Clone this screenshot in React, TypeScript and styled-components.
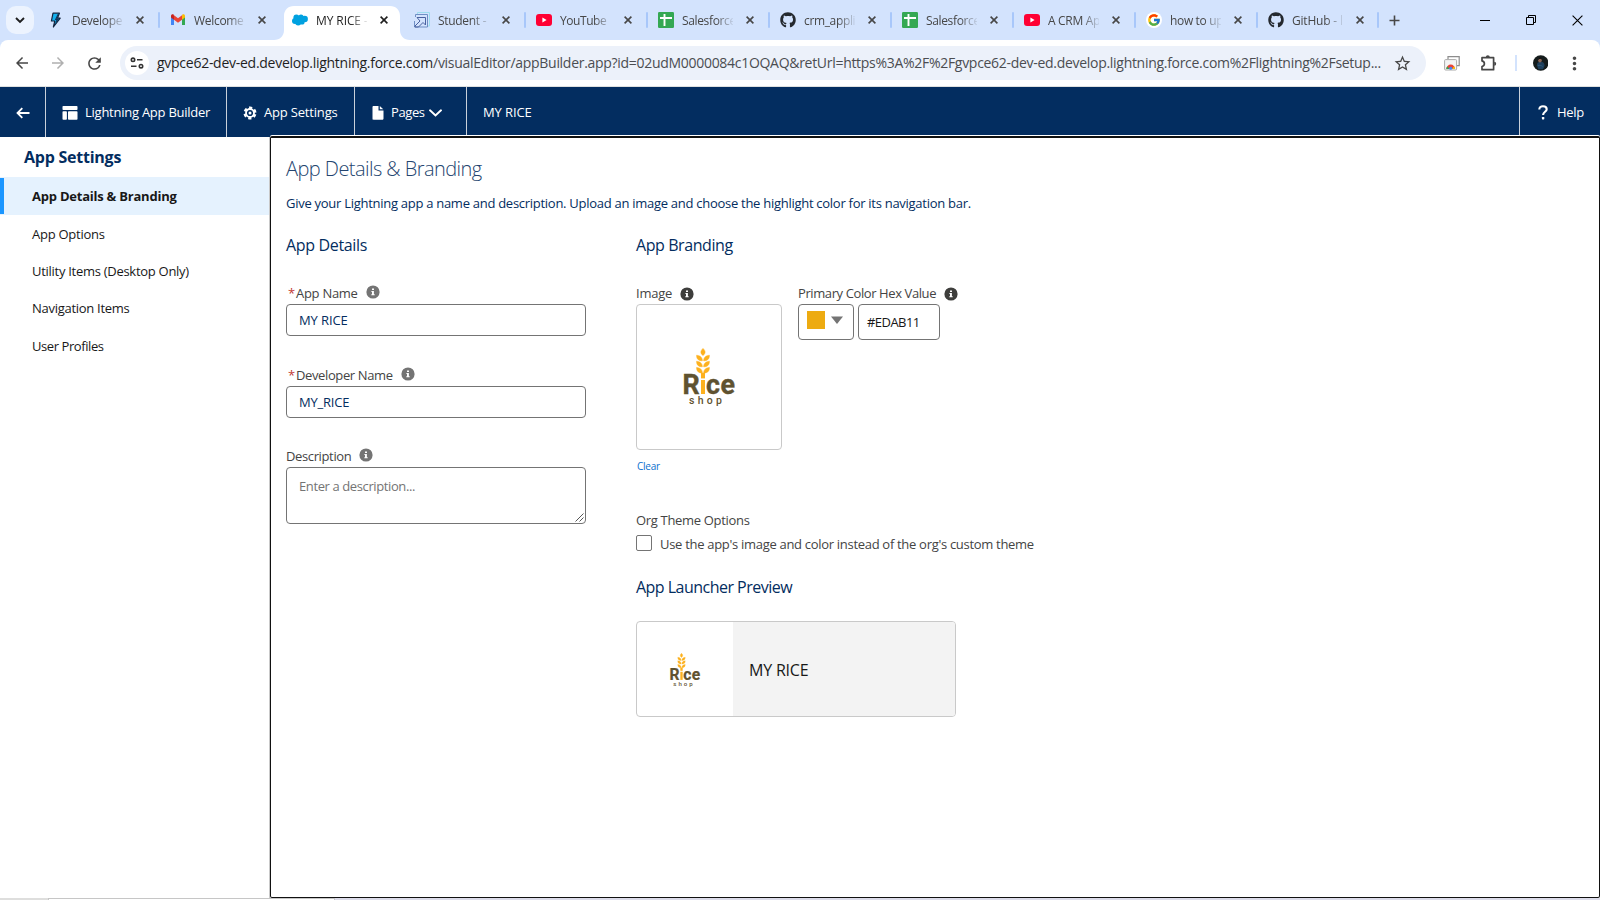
import React from 'react';
import styled, { createGlobalStyle, css } from 'styled-components';
import { MdArrowBack, MdArrowForward, MdRefresh, MdStarBorder, MdMoreVert } from 'react-icons/md';
import { FaGithub } from 'react-icons/fa';
import { FcGoogle } from 'react-icons/fc';

const GlobalStyle = createGlobalStyle`
  *, *::before, *::after { box-sizing: border-box; }
  body {
    margin: 0;
    background: #fff;
    font-family: "Open Sans", "Noto Sans", sans-serif;
    font-size: 13px;
    color: #032d60;
    overflow: hidden;
  }
`;

const Text = styled.span<{ $ls?: number }>`
  white-space: nowrap;
  letter-spacing: ${(p) => p.$ls ?? -0.28}px;
`;

const Page = styled.div`
  width: 1600px;
  height: 900px;
  display: flex;
  flex-direction: column;
  overflow: hidden;
`;

/* ---------- browser tab strip ---------- */

const TabStrip = styled.div`
  flex: none;
  height: 40px;
  display: flex;
  background: #d3e3fd;
`;

const TabSearch = styled.div`
  flex: none;
  width: 28px;
  height: 28px;
  margin: 6px 3px 0 6px;
  border-radius: 10px;
  background: #ecf3fe;
  display: flex;
  align-items: center;
  justify-content: center;
`;

const TabBox = styled.div<{ $divider?: boolean; $width: number }>`
  flex: none;
  position: relative;
  width: ${(p) => p.$width}px;
  height: 40px;
  padding-left: 11px;
  display: flex;
  align-items: center;
  ${(p) =>
    p.$divider &&
    css`
      &::after {
        content: '';
        position: absolute;
        right: -1px;
        top: 12px;
        width: 2px;
        height: 16px;
        border-radius: 1px;
        background: #a8c7fa;
      }
    `}
`;

const ActiveShape = styled.svg`
  position: absolute;
  left: -7px;
  top: 6px;
`;

const Favicon = styled.span`
  position: relative;
  flex: none;
  width: 16px;
  height: 16px;
  display: flex;
  align-items: center;
  justify-content: center;
`;

const TabTitle = styled.span<{ $active?: boolean; $ls: number }>`
  position: relative;
  flex: none;
  width: 51px;
  margin-left: 8px;
  padding-top: 1px;
  overflow: hidden;
  white-space: nowrap;
  font-size: 12px;
  line-height: 18px;
  letter-spacing: ${(p) => p.$ls}px;
  color: ${(p) => (p.$active ? '#1f1f1f' : '#474747')};
  mask-image: linear-gradient(to right, #000 34px, transparent 53px);
`;

const TabClose = styled.span`
  position: relative;
  flex: none;
  width: 16px;
  margin-left: 9px;
  display: flex;
  justify-content: center;
`;

const NewTab = styled.div`
  width: 33px;
  display: flex;
  align-items: center;
  justify-content: center;
`;

const WindowButtons = styled.div`
  margin-left: auto;
  display: flex;
`;

const WindowButton = styled.div`
  width: 46px;
  height: 40px;
  display: flex;
  align-items: center;
  justify-content: center;
`;

/* ---------- browser toolbar ---------- */

const ToolbarBack = styled.div`
  flex: none;
  background: #d3e3fd;
`;

const Toolbar = styled.div`
  height: 47px;
  display: flex;
  align-items: center;
  padding-left: 4px;
  background: #fff;
  border-radius: 8px 8px 0 0;
  border-bottom: 1px solid #dfe1e0;
`;

const ToolButton = styled.div<{ $color?: string; $width?: number }>`
  flex: none;
  width: ${(p) => p.$width ?? 36}px;
  display: flex;
  align-items: center;
  justify-content: center;
  color: ${(p) => p.$color ?? '#474747'};
`;

const AddressBar = styled.div`
  flex: none;
  width: 1306px;
  height: 34px;
  margin-left: 8px;
  padding: 0 14px 0 5px;
  border-radius: 17px;
  background: #ecf1fa;
  display: flex;
  align-items: center;
`;

const SiteInfo = styled.div`
  width: 24px;
  height: 24px;
  border-radius: 50%;
  background: #fff;
  display: flex;
  align-items: center;
  justify-content: center;
`;

const Url = styled.div`
  margin-left: 8px;
  white-space: nowrap;
  font-size: 14px;
  line-height: 20px;
  letter-spacing: -0.294px;
  color: #4b4d51;
  flex: 1;
`;

const Host = styled.span`
  color: #1f1f1f;
  letter-spacing: -0.265px;
`;

const ToolDivider = styled.div`
  width: 2px;
  height: 16px;
  margin: 0 16px 0 15px;
  background: #d3e3fd;
`;

/* ---------- builder header ---------- */

const Header = styled.header`
  flex: none;
  height: 50px;
  display: flex;
  background: #032d60;
  color: #fff;
`;

const HeaderItem = styled.div<{ $width?: number; $bare?: boolean; $pad?: number }>`
  flex: none;
  width: ${(p) => (p.$width ? `${p.$width}px` : 'auto')};
  display: flex;
  align-items: center;
  padding: 1px 0 0 ${(p) => p.$pad ?? 16}px;
  border-right: ${(p) => (p.$bare ? 'none' : '1px solid #c9d0da')};
  line-height: 20px;
`;

const HeaderHelp = styled(HeaderItem)`
  margin-left: auto;
  border-left: 1px solid #c9d0da;
`;

const HeaderText = styled(Text)<{ $gap?: number }>`
  margin: 0 0 2px ${(p) => p.$gap ?? 8}px;
`;

const Chevron = styled.svg`
  margin-left: 4px;
`;

/* ---------- body ---------- */

const Body = styled.div`
  flex: 1;
  min-height: 0;
  display: flex;
`;

const Sidebar = styled.nav`
  flex: none;
  width: 270px;
  border-right: 1px solid #c9c9c9;
`;

const SidebarTitle = styled.h2`
  margin: 0;
  padding: 8px 0 0 24px;
  height: 40px;
  font-size: 16px;
  font-weight: 700;
  line-height: 24px;
  letter-spacing: -0.24px;
`;

const SidebarItem = styled.div<{ $selected?: boolean; $ls: number }>`
  position: relative;
  height: ${(p) => (p.$selected ? 38 : 37.4)}px;
  padding-left: 32px;
  display: flex;
  align-items: center;
  white-space: nowrap;
  letter-spacing: ${(p) => p.$ls}px;
  color: #181818;
  ${(p) =>
    p.$selected &&
    css`
      font-weight: 700;
      background: #e5f2fe;
      &::before {
        content: '';
        position: absolute;
        left: 0;
        top: 1px;
        bottom: 1px;
        width: 4px;
        background: #1b96ff;
      }
    `}
`;

const Main = styled.main`
  flex: 1;
  margin-top: -1px;
  border: 1px solid #111;
  border-top-width: 2px;
  border-radius: 2px;
  background: #fff;
  box-shadow: 0 -1px 0 #fff;
  padding: 19px 0 0 15px;
`;

const PageTitle = styled.h1`
  margin: 0;
  font-size: 20px;
  font-weight: 300;
  line-height: 24px;
  letter-spacing: -0.549px;
  color: #24456f;
`;

const Lead = styled.p`
  margin: 12px 0 0;
  line-height: 20px;
`;

const Columns = styled.div`
  display: flex;
  gap: 50px;
  margin-top: 20px;
`;

const Column = styled.section<{ $width?: number }>`
  width: ${(p) => p.$width ?? 460}px;
`;

const SectionTitle = styled.h3<{ $top?: number; $ls: number }>`
  margin: ${(p) => p.$top ?? 0}px 0 0;
  font-size: 16px;
  font-weight: 400;
  line-height: 24px;
  letter-spacing: ${(p) => p.$ls}px;
  white-space: nowrap;
`;

const Field = styled.div<{ $top: number }>`
  margin-top: ${(p) => p.$top}px;
`;

const Label = styled.div<{ $inset?: number; $height?: number }>`
  height: ${(p) => p.$height ?? 21}px;
  padding: 0 0 2px ${(p) => p.$inset ?? 0}px;
  display: flex;
  align-items: center;
  color: #444;
`;

const Required = styled.span`
  width: 8px;
  color: #c23934;
`;

const InfoBadge = styled.svg<{ $gap?: number; $lift?: number }>`
  margin-left: ${(p) => p.$gap ?? 8}px;
  margin-bottom: ${(p) => p.$lift ?? 2}px;
`;

const TextInput = styled.div`
  height: 32px;
  padding-left: 12px;
  border: 1px solid #747474;
  border-radius: 4px;
  display: flex;
  align-items: center;
`;

const TextArea = styled.div`
  height: 57px;
  padding: 8px 1px 1px 12px;
  border: 1px solid #747474;
  border-radius: 4px;
  display: flex;
  justify-content: space-between;
  line-height: 20px;
  color: #747474;
`;

const ResizeGrip = styled.svg`
  align-self: flex-end;
`;

const BrandRow = styled.div`
  display: flex;
  gap: 16px;
  margin-top: 27px;
`;

const ImageBox = styled.div`
  width: 146px;
  height: 146px;
  border: 1px solid #c9c9c9;
  border-radius: 4px;
`;

const ClearLink = styled.div`
  margin: 9px 0 0 1px;
  font-size: 10px;
  line-height: 15px;
  color: #0b6fce;
`;

const ColorControls = styled.div`
  display: flex;
  gap: 4px;
`;

const SwatchButton = styled.div`
  width: 56px;
  height: 36px;
  padding: 6px 0 0 8px;
  border: 1px solid #747474;
  border-radius: 4px;
  display: flex;
  gap: 6px;
`;

const Swatch = styled.div`
  width: 18px;
  height: 18px;
  background: #edab11;
`;

const HexInput = styled.div`
  width: 82px;
  height: 36px;
  padding-left: 8px;
  border: 1px solid #747474;
  border-radius: 4px;
  display: flex;
  align-items: center;
  color: #181818;
`;

const ThemeLabel = styled.div`
  margin-top: 36px;
  line-height: 20px;
  color: #444;
`;

const CheckRow = styled.div`
  margin-top: 4px;
  height: 20px;
  display: flex;
  align-items: center;
  gap: 8px;
  color: #444;
`;

const Checkbox = styled.div`
  width: 16px;
  height: 16px;
  margin-bottom: 2px;
  border: 1px solid #747474;
  border-radius: 2px;
`;

const PreviewCard = styled.div`
  width: 320px;
  height: 96px;
  margin-top: 22px;
  border: 1px solid #c9c9c9;
  border-radius: 4px;
  overflow: hidden;
  display: flex;
`;

const PreviewImage = styled.div`
  width: 96px;
  padding-top: 1px;
  display: flex;
  align-items: center;
  justify-content: center;
`;

const PreviewName = styled.div`
  flex: 1;
  padding: 1px 0 0 16px;
  background: #f3f3f3;
  display: flex;
  align-items: center;
  font-size: 16px;
  color: #181818;
`;

/* ---------- strip of the window below ---------- */

const BottomStrip = styled.div`
  flex: none;
  height: 2px;
  display: flex;
  background: #dcdcea;
`;

const BottomStart = styled.div`
  width: 48px;
  background: #dededd;
`;

const BottomField = styled.div`
  width: 287px;
  border: solid #c6c6c6;
  border-width: 1px 1px 0 1px;
  background: #fff;
`;

/* ---------- drawings ---------- */

const Cross = ({ size = 8, color = '#474747', width = 1.6 }: { size?: number; color?: string; width?: number }) => (
  <svg width={size} height={size} viewBox={`0 0 ${size} ${size}`}>
    <path d={`M.6.6 ${size - 0.6} ${size - 0.6}M${size - 0.6}.6.6 ${size - 0.6}`} stroke={color} strokeWidth={width} fill="none" />
  </svg>
);

const BoltIcon = () => (
  <svg width="16" height="16" viewBox="0 0 16 16">
    <path d="M5 1.200h6.400L9.400 6.200h2.800L5.400 15l1.400-6H3.400z" fill="#12b0ee" stroke="#12243f" strokeWidth="1.200" strokeLinejoin="round" />
    <path d="M9.800 1.800h1.200L8.700 6.800h2.500L7 12l1.300-4H6.800z" fill="#12355b" />
  </svg>
);

const GmailIcon = () => (
  <svg width="16" height="16" viewBox="0 0 16 16">
    <path d="M1 4v9h3V6.5z" fill="#4285f4" />
    <path d="M15 4v9h-3V6.5z" fill="#34a853" />
    <path d="M12 3.5v4.200l3-2.300V4c0-1.600-1.600-2.200-2.600-1.400z" fill="#fbbc04" />
    <path d="M4 3.5v4.200L1 5.400V4c0-1.600 1.600-2.200 2.600-1.400z" fill="#c5221f" />
    <path d="M4 3.200 8 6.200l4-3v4.500l-4 3-4-3z" fill="#ea4335" />
  </svg>
);

const CloudIcon = () => (
  <svg width="16" height="12" viewBox="0 0 16 12">
    <g fill="#00a1e0">
      <circle cx="4.400" cy="3.600" r="3" />
      <circle cx="9" cy="3" r="2.600" />
      <circle cx="12.700" cy="5" r="3.200" />
      <circle cx="3" cy="6.900" r="3" />
      <circle cx="6.200" cy="8.400" r="3" />
      <circle cx="10" cy="8" r="2.600" />
      <rect x="4" y="3" width="8" height="6" />
    </g>
  </svg>
);

const ArrowBoxIcon = () => (
  <svg width="16" height="16" viewBox="0 0 16 16" fill="none">
    <path d="M3.500 2V.5h12v13.500h-2" stroke="#9cdcee" />
    <path d="M1.500 5V2.500h12v12.500H.5V9" stroke="#6f8fc4" />
    <path d="M3 5.500h8.500V13L9 10.500 4.500 15H1v-1l5-5z" stroke="#4a62a0" />
  </svg>
);

const YouTubeIcon = () => (
  <svg width="16" height="12" viewBox="0 0 16 12">
    <rect width="16" height="12" rx="3" fill="#ff0033" />
    <path d="M6.400 3.600 10.600 6 6.400 8.400z" fill="#fff" />
  </svg>
);

const SheetsIcon = () => (
  <svg width="16" height="16" viewBox="0 0 16 16">
    <rect width="16" height="16" rx="1.200" fill="#34a853" />
    <path d="M6.500 2v12M2 6h12" stroke="#fff" strokeWidth="1.900" />
  </svg>
);

const GoogleBadge = styled.span`
  width: 16px;
  height: 16px;
  border-radius: 50%;
  background: #fff;
  display: flex;
  align-items: center;
  justify-content: center;
`;

const GitHubIcon = () => <FaGithub size={16} color="#24292f" />;

const Info = ({ color = '#747474', gap, lift }: { color?: string; gap?: number; lift?: number }) => (
  <InfoBadge $gap={gap} $lift={lift} width="14" height="14" viewBox="0 0 14 14">
    <circle cx="7" cy="7" r="6.600" fill={color} />
    <path d="M6 3.500h2v1.600H6zM5.400 6h2.500v3.300h.8v1H5.300v-1H6V7h-.6z" fill="#fff" />
  </InfoBadge>
);

const Leaves = ({ y }: { y: number }) => (
  <>
    <path d={`M-12.4 ${y}c3 .2 5.800 1.800 5.800 5.600c-3.400 .2-6-1.600-5.800-5.600z`} />
    <path d={`M.4 ${y}c-3 .2-5.800 1.800-5.800 5.600c3.400 .2 6-1.600 5.800-5.600z`} />
  </>
);

const RiceLogo = ({ size }: { size: number }) => (
  <svg width={size} height={size} viewBox="-72 -72 144 144" fontFamily="Roboto, sans-serif" fill="#5f5230">
    <g fill="#fdb11e">
      <g stroke="#fdb11e" strokeWidth=".5">
        <path d="M-6-28.600c2.800 2.600 2.800 4.800 0 7.200c-2.800-2.400-2.800-4.600 0-7.200z" />
        <Leaves y={-21.8} />
        <Leaves y={-15.8} />
        <Leaves y={-9.6} />
      </g>
      <rect x="-8" y="-4" width="4" height="5.400" />
      <rect x="-8" y="3" width="4" height="14" />
    </g>
    <g fontSize="26.800" fontWeight="700" stroke="#5f5230" strokeWidth=".4">
      <text x="-26.600" y="17">R</text>
      <text x="-3" y="17" textLength="29">ce</text>
    </g>
    <text x="-20" y="27" fontSize="10.500" fontWeight="500" textLength="33">shop</text>
  </svg>
);

type TabInfo = { title: string; icon: React.ReactNode; ls?: number; active?: boolean; divider?: boolean; width?: number };

const tabs: TabInfo[] = [
  { title: 'Developer Edition', icon: <BoltIcon />, divider: true },
  { title: 'Welcome to', icon: <GmailIcon /> },
  { title: 'MY RICE - Lightning', icon: <CloudIcon />, active: true, ls: -0.1 },
  { title: 'Student - Smart', icon: <ArrowBoxIcon />, divider: true },
  { title: 'YouTube', icon: <YouTubeIcon />, divider: true, ls: -0.43 },
  { title: 'Salesforce', icon: <SheetsIcon />, divider: true, ls: -0.35 },
  { title: 'crm_application', icon: <GitHubIcon />, divider: true, ls: -0.35 },
  { title: 'Salesforce', icon: <SheetsIcon />, divider: true, ls: -0.35 },
  { title: 'A CRM Application', icon: <YouTubeIcon />, divider: true },
  { title: 'how to upload', icon: <GoogleBadge><FcGoogle size={14} /></GoogleBadge>, divider: true, ls: -0.35 },
  { title: 'GitHub - lightning', icon: <GitHubIcon />, divider: true, width: 121, ls: -0.2 },
];

const BrowserTab = ({ tab }: { tab: TabInfo }) => (
  <TabBox $divider={tab.divider} $width={tab.width ?? 122}>
    {tab.active && (
      <ActiveShape width="136" height="34" viewBox="0 0 136 34">
        <path d="M0 34c6 0 10-4 10-10V10C10 4 14 0 20 0h96c6 0 10 4 10 10v14c0 6 4 10 10 10z" fill="#fff" />
      </ActiveShape>
    )}
    <Favicon>{tab.icon}</Favicon>
    <TabTitle $active={tab.active} $ls={tab.ls ?? -0.3}>{tab.title}</TabTitle>
    <TabClose>
      <Cross color={tab.active ? '#1f1f1f' : '#474747'} />
    </TabClose>
  </TabBox>
);

const menu = [
  { label: 'App Details & Branding', ls: -0.23, selected: true },
  { label: 'App Options', ls: -0.26 },
  { label: 'Utility Items (Desktop Only)', ls: -0.28 },
  { label: 'Navigation Items', ls: -0.28 },
  { label: 'User Profiles', ls: -0.42 },
];

export default function App() {
  return (
    <Page>
      <GlobalStyle />
      <TabStrip>
        <TabSearch>
          <svg width="10" height="7" viewBox="0 0 10 7">
            <path d="M1 1l4 4 4-4" fill="none" stroke="#1f1f1f" strokeWidth="1.900" />
          </svg>
        </TabSearch>
        {tabs.map((tab, i) => (
          <BrowserTab key={i} tab={tab} />
        ))}
        <NewTab>
          <svg width="11" height="11" viewBox="0 0 11 11">
            <path d="M5.500 .5v10M.5 5.500h10" stroke="#474747" strokeWidth="1.600" />
          </svg>
        </NewTab>
        <WindowButtons>
          <WindowButton>
            <svg width="10" height="10" viewBox="0 0 10 10"><path d="M0 5.500h10" stroke="#000" /></svg>
          </WindowButton>
          <WindowButton>
            <svg width="10" height="10" viewBox="0 0 10 10" fill="none" stroke="#000">
              <path d="M.5 2.500h7v7h-7zM2.500 2.500v-2h7v7h-2" />
            </svg>
          </WindowButton>
          <WindowButton><Cross size={11} color="#000" width={1.1} /></WindowButton>
        </WindowButtons>
      </TabStrip>

      <ToolbarBack>
        <Toolbar>
          <ToolButton><MdArrowBack size={18} /></ToolButton>
          <ToolButton $color="#b0b0b0"><MdArrowForward size={18} /></ToolButton>
          <ToolButton><MdRefresh size={19} /></ToolButton>
          <AddressBar>
            <SiteInfo>
              <svg width="14" height="12" viewBox="0 0 14 12" fill="none" stroke="#333" strokeWidth="1.600">
                <circle cx="3" cy="2.800" r="1.700" />
                <path d="M7 2.800h5.500M1 9.200h5.500" />
                <circle cx="11" cy="9.200" r="1.700" />
              </svg>
            </SiteInfo>
            <Url>
              <Host>gvpce62-dev-ed.develop.lightning.force.com</Host>
              /visualEditor/appBuilder.app?id=02udM0000084c1OQAQ&amp;retUrl=https%3A%2F%2Fgvpce62-dev-ed.develop.lightning.force.com%2Flightning%2Fsetup...
            </Url>
            <MdStarBorder size={19} color="#474747" />
          </AddressBar>
          <ToolButton $width={52}>
            <svg width="16" height="15" viewBox="0 0 16 15">
              <path d="M4 3V.7h11.200v9H13" fill="none" stroke="#8c8c8c" strokeWidth="1.200" />
              <rect x=".6" y="3.600" width="12" height="10.400" rx="1" fill="#f4f4f4" stroke="#aaa" />
              <path d="M2.300 13a4.400 4.400 0 0 1 8.800 0z" fill="#ea4335" />
              <path d="M2.300 13a4.400 4.400 0 0 1 1-2.800l2 2.800z" fill="#34a853" />
              <path d="M11.100 13a4.400 4.400 0 0 0-1-2.800l-2 2.800z" fill="#fbbc04" />
              <circle cx="6.700" cy="12.200" r="1.500" fill="#4285f4" />
            </svg>
          </ToolButton>
          <ToolButton $width={22}>
            <svg width="18" height="18" viewBox="0 0 18 18">
              <path d="M2 3.700h11.600v12H2v-3.200c1.700-.5 2.400-1.500 2.400-2.800S3.700 7.400 2 6.900z" fill="none" stroke="#474747" strokeWidth="1.700" strokeLinejoin="round" />
              <path d="M5.800 3.200a2 2 0 0 1 4 0zM14.200 7.700a2 2 0 0 1 0 4z" fill="#474747" />
            </svg>
          </ToolButton>
          <ToolDivider />
          <svg width="20" height="20" viewBox="0 0 20 20">
            <circle cx="10" cy="10" r="10" fill="#151c1c" />
            <path d="M5 13c0-3 2-4.500 5-4.500s5 2 5 5L13 18H7z" fill="#1e3f5c" />
            <ellipse cx="9" cy="6.500" rx="2.300" ry="3" fill="#8a6657" />
            <path d="M6.400 6c0-4 5-4.500 5.200-.6-1.600-1.500-3.600-1-5.200.6z" fill="#0b0d0f" />
            <path d="M6.500 13.500c2-1 4-.5 6 1" stroke="#37627f" fill="none" />
          </svg>
          <ToolButton $width={52}><MdMoreVert size={21} /></ToolButton>
        </Toolbar>
      </ToolbarBack>

      <Header>
        <HeaderItem $width={46}>
          <svg width="14" height="12" viewBox="0 0 14 12">
            <path d="M13.500 6H1.500M6.300 1.200 1.500 6l4.800 4.800" fill="none" stroke="#fff" strokeWidth="1.800" />
          </svg>
        </HeaderItem>
        <HeaderItem $width={181}>
          <svg width="16" height="14" viewBox="0 0 16 14" fill="#fff">
            <rect x=".5" width="15" height="4" rx=".8" />
            <rect x=".5" y="5.200" width="4.400" height="8.600" rx=".8" />
            <rect x="6" y="5.200" width="9.500" height="8.600" rx=".8" />
          </svg>
          <HeaderText $gap={7} $ls={-0.25}>Lightning App Builder</HeaderText>
        </HeaderItem>
        <HeaderItem $width={128}>
          <svg width="14" height="14" viewBox="0 0 14 14">
            <circle cx="7" cy="7" r="4.900" fill="none" stroke="#fff" strokeWidth="3.200" strokeDasharray="2.900 2.230" transform="rotate(13 7 7)" />
            <circle cx="7" cy="7" r="4" fill="none" stroke="#fff" strokeWidth="1.800" />
            <circle cx="7" cy="7" r="1.500" fill="#fff" />
          </svg>
          <HeaderText $gap={7} $ls={-0.18}>App Settings</HeaderText>
        </HeaderItem>
        <HeaderItem $width={112} $pad={17}>
          <svg width="12" height="14" viewBox="0 0 12 14" fill="#fff">
            <path d="M1.500 0h5v4.500h5v8c0 .8-.5 1.300-1.300 1.300H1.500C.9 13.800.5 13.400.5 12.600V1.200C.5.400.9 0 1.500 0z" />
            <path d="M7.800 0v3.200h3.500z" />
          </svg>
          <HeaderText $gap={7} $ls={-0.4}>Pages</HeaderText>
          <Chevron width="13" height="8" viewBox="0 0 13 8">
            <path d="M1 1.300l5.500 5.200L12 1.300" fill="none" stroke="#fff" strokeWidth="1.900" strokeLinecap="round" />
          </Chevron>
        </HeaderItem>
        <HeaderItem $bare>
          <HeaderText $gap={0} $ls={-0.1}>MY RICE</HeaderText>
        </HeaderItem>
        <HeaderHelp $bare $width={81} $pad={18}>
          <svg width="10" height="15" viewBox="0 0 10 15">
            <path d="M1.300 4.600C1.300 2.400 2.800 1.200 5 1.200s3.700 1.200 3.700 3.100c0 2.400-3.600 2.700-3.600 5.600" fill="none" stroke="#fff" strokeWidth="2.100" />
            <rect x="3.900" y="12" width="2.400" height="2.400" rx=".6" fill="#fff" />
          </svg>
          <HeaderText $gap={9}>Help</HeaderText>
        </HeaderHelp>
      </Header>

      <Body>
        <Sidebar>
          <SidebarTitle>App Settings</SidebarTitle>
          {menu.map((m) => (
            <SidebarItem key={m.label} $selected={m.selected} $ls={m.ls}>{m.label}</SidebarItem>
          ))}
        </Sidebar>
        <Main>
          <PageTitle>App Details &amp; Branding</PageTitle>
          <Lead>
            <Text $ls={-0.276}>
              Give your Lightning app a name and description. Upload an image and choose the highlight color for its navigation bar.
            </Text>
          </Lead>
          <Columns>
            <Column $width={300}>
              <SectionTitle $ls={-0.34}>App Details</SectionTitle>
              <Field $top={26}>
                <Label $inset={2}><Required>*</Required><Text $ls={-0.28}>App Name</Text><Info /></Label>
                <TextInput><Text $ls={-0.1}>MY RICE</Text></TextInput>
              </Field>
              <Field $top={29}>
                <Label $inset={2}><Required>*</Required><Text $ls={-0.38}>Developer Name</Text><Info /></Label>
                <TextInput><Text $ls={-0.22}>MY_RICE</Text></TextInput>
              </Field>
              <Field $top={28}>
                <Label><Text $ls={-0.37}>Description</Text><Info /></Label>
                <TextArea>
                  <Text $ls={-0.391}>Enter a description...</Text>
                  <ResizeGrip width="9" height="9" viewBox="0 0 9 9">
                    <path d="M.5 8.500l8-8M4.500 8.500l4-4" stroke="#555" fill="none" />
                  </ResizeGrip>
                </TextArea>
              </Field>
            </Column>
            <Column>
              <SectionTitle $ls={-0.42}>App Branding</SectionTitle>
              <BrandRow>
                <div>
                  <Label $height={20}><Text $ls={-0.25}>Image</Text><Info color="#3e3e3c" gap={8} lift={-2} /></Label>
                  <ImageBox><RiceLogo size={144} /></ImageBox>
                  <ClearLink><Text $ls={-0.25}>Clear</Text></ClearLink>
                </div>
                <div>
                  <Label $height={20}><Text $ls={-0.4}>Primary Color Hex Value</Text><Info color="#3e3e3c" gap={8} lift={-2} /></Label>
                  <ColorControls>
                    <SwatchButton>
                      <Swatch />
                      <svg width="12" height="18" viewBox="0 0 12 18"><path d="M0 5.500h12l-6 7.500z" fill="#747474" /></svg>
                    </SwatchButton>
                    <HexInput><Text $ls={-0.55}>#EDAB11</Text></HexInput>
                  </ColorControls>
                </div>
              </BrandRow>
              <ThemeLabel><Text $ls={-0.32}>Org Theme Options</Text></ThemeLabel>
              <CheckRow>
                <Checkbox />
                <Text $ls={-0.3}>Use the app's image and color instead of the org's custom theme</Text>
              </CheckRow>
              <SectionTitle $top={21} $ls={-0.52}>App Launcher Preview</SectionTitle>
              <PreviewCard>
                <PreviewImage><RiceLogo size={84} /></PreviewImage>
                <PreviewName><Text $ls={-0.2}>MY RICE</Text></PreviewName>
              </PreviewCard>
            </Column>
          </Columns>
        </Main>
      </Body>

      <BottomStrip>
        <BottomStart />
        <BottomField />
      </BottomStrip>
    </Page>
  );
}
